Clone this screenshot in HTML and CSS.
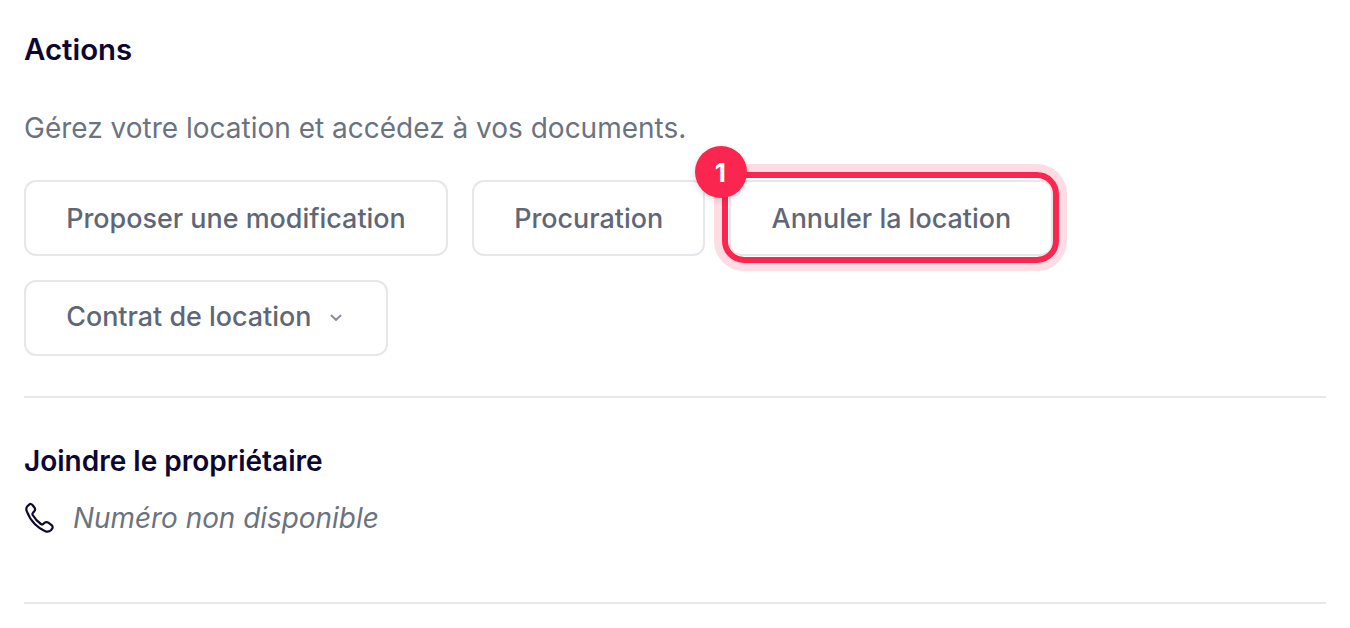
FILE: index.html
```html
<!DOCTYPE html>
<html lang="fr">
<head>
<meta charset="utf-8">
<title>Actions</title>
<link rel="stylesheet" href="styles.css">
</head>
<body>
<main class="panel">
  <section class="actions">
    <h2 class="title title-main">Actions</h2>
    <p class="intro">Gérez votre location et accédez à vos documents.</p>
    <div class="buttons">
      <button class="btn">Proposer une modification</button>
      <button class="btn">Procuration</button>
      <div class="highlighted">
        <button class="btn">Annuler la location</button>
        <span class="ring"></span>
        <span class="badge">1</span>
      </div>
      <button class="btn btn-menu"><span class="btn-menu-label">Contrat de location</span>
        <svg class="chevron" viewBox="0 0 20 20" width="20" height="20" fill="none" stroke="currentColor" stroke-width="2" stroke-linecap="round" stroke-linejoin="round"><path d="M5.5 7.5 10 12l4.5-4.5"/></svg>
      </button>
    </div>
  </section>
  <section class="contact">
    <h3 class="title">Joindre le propriétaire</h3>
    <div class="phone">
      <svg class="phone-icon" viewBox="0 0 32 32" width="32" height="32" fill="none" stroke="currentColor" stroke-width="2.2" stroke-linecap="round" stroke-linejoin="round"><path d="M5.2 2.600 3.600 4c-1.400 1.300-1.600 3-.9 5 1.800 5 4.800 9.700 8.300 13.300 3 3 6.500 5.400 10.200 6.900 2.100.8 4.100.5 5.700-1l1-1.100c1.100-1.200 1-2.900-.3-3.900l-3.300-2.500c-1.100-.8-2.500-.8-3.500 0l-1.600 1.300c-.7.5-1.600.5-2.300 0-3.300-2.400-6.200-5.500-8.200-9-.4-.8-.3-1.700.3-2.300l1.300-1.400c.9-1 1-2.300.3-3.500L8.400 3c-.8-1.200-2.200-1.400-3.200-.4z"/></svg>
      <span class="unavailable">Numéro non disponible</span>
    </div>
  </section>
</main>
</body>
</html>
```
FILE: styles.css
```css
* { box-sizing: border-box; }
html, body { margin: 0; background: #fff; overflow: hidden; }
body { font-family: Inter, "Liberation Sans", sans-serif; color: #0f0a2e; }
.panel { padding: 0 24px; }
.actions { padding-top: 32px; padding-bottom: 40px; border-bottom: 2px solid #e5e7eb; }
.title { margin: 0; font-size: 28px; line-height: 36px; font-weight: 600; color: #0d0630; }
.title-main { font-size: 29.4px; }
.intro { margin: 42px 0 0; font-size: 28px; line-height: 36px; color: #6b7280; }
.buttons { display: flex; flex-wrap: wrap; gap: 24px; margin-top: 34px; }
.btn { display: inline-flex; align-items: center; height: 76px; padding: 0 40.2px; background: #fff; border: 2px solid #e5e7eb; border-radius: 12px; font-family: inherit; font-size: 26.92px; font-weight: 500; color: #5f6677; }
.btn-menu-label { margin-bottom: 4px; }
.highlighted { position: relative; display: flex; }
.ring { position: absolute; inset: -8px -6px -7px -7px; border: 6.5px solid #fb2650; border-radius: 22px; box-shadow: 0 0 0 8px #fedce3; pointer-events: none; }
.badge { position: absolute; left: -34px; top: -34px; width: 52px; height: 52px; display: flex; align-items: center; justify-content: center; padding-right: 2px; border-radius: 50%; background: #fb2650; color: #fff; font-size: 26px; font-weight: 700; box-shadow: 0 2px 6px rgba(0,0,0,.15); }
.chevron { margin-left: 14.6px; color: #8b8f99; }
.contact { padding-top: 45px; padding-bottom: 66px; border-bottom: 2px solid #e5e7eb; }
.phone { display: flex; align-items: center; gap: 17px; margin-top: 21px; height: 36px; }
.phone-icon { color: #0d0630; flex: none; }
.unavailable { font-size: 27.9px; font-style: italic; color: #6b7280; }
```
